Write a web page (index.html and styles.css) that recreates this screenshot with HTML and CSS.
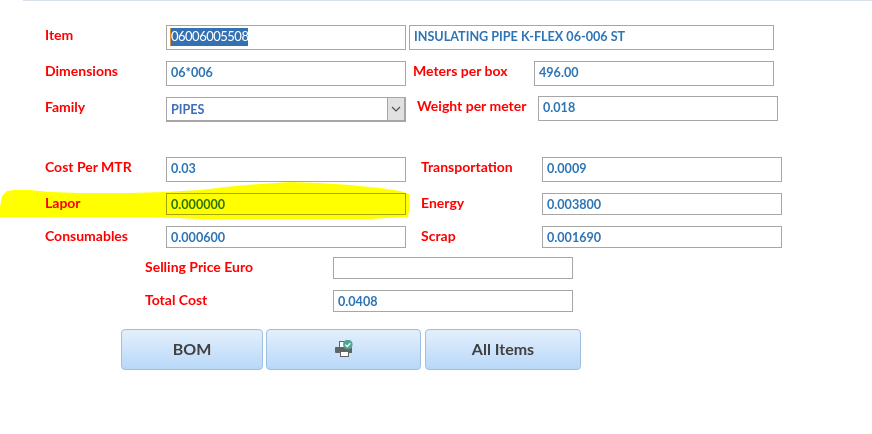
FILE: index.html
```html
<!DOCTYPE html>
<html lang="en">
<head>
<meta charset="utf-8">
<title>Item</title>
<link rel="stylesheet" href="styles.css">
</head>
<body>
<div class="topline"></div>
<main class="form">
  <div class="row h25">
    <span class="label">Item</span>
    <div class="box w240"><span class="selected">06006005508</span></div>
    <div class="box name">INSULATING PIPE K-FLEX 06-006 ST</div>
  </div>
  <div class="row h25 mt11">
    <span class="label">Dimensions</span>
    <div class="box w240">06*006</div>
    <span class="label side7">Meters per box</span>
    <div class="box w240">496.00</div>
  </div>
  <div class="row h25 mt11">
    <span class="label">Family</span>
    <div class="box w240 combo">
      <span class="combo-text">PIPES</span>
      <span class="combo-btn">
        <svg width="10" height="6" viewBox="0 0 10 6"><path d="M1 1l4 4 4-4" fill="none" stroke="#505050" stroke-width="1.2"/></svg>
      </span>
    </div>
    <span class="label side11 raise">Weight per meter</span>
    <div class="box w240 raise">0.018</div>
  </div>
  <div class="row h25 mt35">
    <span class="label">Cost Per MTR</span>
    <div class="box w240">0.03</div>
    <span class="label side15">Transportation</span>
    <div class="box w240">0.0009</div>
  </div>
  <div class="row h22 mt11">
    <span class="label">Lapor</span>
    <div class="box w240">0.000000</div>
    <span class="label side15">Energy</span>
    <div class="box w240">0.003800</div>
  </div>
  <div class="row h22 mt11">
    <span class="label">Consumables</span>
    <div class="box w240">0.000600</div>
    <span class="label side15">Scrap</span>
    <div class="box w240">0.001690</div>
  </div>
  <div class="row h22 mt9 inset">
    <span class="label wide">Selling Price Euro</span>
    <div class="box w240"></div>
  </div>
  <div class="row h22 mt11 inset">
    <span class="label wide">Total Cost</span>
    <div class="box w240">0.0408</div>
  </div>
  <div class="buttons">
    <button class="btn b1" type="button">BOM</button>
    <button class="btn b2" type="button" aria-label="Print">
      <svg width="18" height="17" viewBox="0 0 18 17">
        <rect x="4.500" y="1.500" width="6" height="6" fill="#fff" stroke="#5f6468"/>
        <path d="M1 7h15a1 1 0 0 1 1 1v5h-3v-2H5v2H1a1 1 0 0 1-1-1V8a1 1 0 0 1 1-1z" fill="#5f6468"/>
        <rect x="5.500" y="11.500" width="8" height="5" fill="#fff" stroke="#5f6468"/>
        <circle cx="12.800" cy="4.500" r="4.800" fill="#4fa58f"/>
        <path d="M10.300 4.600l2 2 3-3.300" fill="none" stroke="#fff" stroke-width="1.300"/>
      </svg>
    </button>
    <button class="btn b3" type="button">All Items</button>
  </div>
</main>
<svg class="marker" width="412" height="40" viewBox="0 0 412 40">
  <path d="M0 25 L2 14 L7 9 L14 8 L30 8 L50 10 L80 11 L130 11 L165 10 L200 8 L235 4 L260 2 L290 0 L320 1 L350 3 L380 6 L400 9 L409 12 L410 24 L408 35 L370 37 L300 37 L200 37 L150 35 L60 35 L0 35 Z" fill="#ffff00"/>
</svg>
</body>
</html>
```
FILE: styles.css
```css
html, body {
  margin: 0;
  padding: 0;
  background: #fff;
}
body {
  position: relative;
  width: 872px;
  height: 434px;
  overflow: hidden;
  font-family: "Lato", "Carlito", "Liberation Sans", sans-serif;
  font-size: 12.6px;
  font-weight: 700;
}
.topline {
  height: 1px;
  margin-left: 23px;
  background: #d8e0ec;
}
.form {
  padding: 24px 0 0 45px;
}
.row {
  display: flex;
  align-items: center;
}
.h25 { height: 25px; }
.h22 { height: 22px; }
.mt9 { margin-top: 9px; }
.mt11 { margin-top: 11px; }
.mt35 { margin-top: 35px; }
.inset { padding-left: 100px; }
.label {
  flex: none;
  width: 121px;
  color: #ff0000;
  font-size: 14px;
  white-space: nowrap;
}
.h25 .label { margin-bottom: 6px; }
.h22 .label { margin-bottom: 4px; }
.label.wide { width: 188px; }
.side7 { margin-left: 7px; }
.side11 { margin-left: 11px; }
.side15 { margin-left: 15px; }
.box {
  flex: none;
  box-sizing: border-box;
  height: 100%;
  display: flex;
  align-items: center;
  padding-left: 4px;
  border: 1px solid #a6a6a6;
  color: #2e75b6;
  background: #fff;
  white-space: nowrap;
}
.h25 .box { padding-bottom: 2px; }
.w240 { width: 240px; }
.name {
  width: 365px;
  margin-left: 3px;
}
.raise { position: relative; top: -1px; }
.selected {
  height: 18px;
  box-sizing: border-box;
  line-height: 17px;
  font-weight: 400;
  font-size: 13px;
  color: #fff;
  background: #3371b3;
  border-left: 1px solid #d98c30;
  margin-left: -1px;
  letter-spacing: -0.5px;
}
.h25 .combo {
  padding-right: 0;
  padding-bottom: 0;
  border-right-width: 2px;
  border-bottom-width: 2px;
  justify-content: space-between;
}
.combo-text { color: #3f6fb9; }
.combo-btn {
  box-sizing: border-box;
  width: 17px;
  height: 100%;
  display: flex;
  align-items: center;
  justify-content: center;
  background: #e1e1e1;
  border-left: 1px solid #a6a6a6;
}
.buttons {
  display: flex;
  margin: 17px 0 0 76px;
}
.btn {
  box-sizing: border-box;
  height: 41px;
  padding: 0 0 2px;
  display: flex;
  align-items: center;
  justify-content: center;
  border: 1px solid #9dbfe2;
  border-radius: 4px;
  background: linear-gradient(#e4effc, #b8d8f9);
  color: #404040;
  font-family: inherit;
  font-size: 16px;
  font-weight: 700;
}
.b1 { width: 142px; }
.b2 { width: 155px; margin-left: 3px; }
.b3 { width: 156px; margin-left: 4px; }
.marker {
  position: absolute;
  left: 0;
  top: 182px;
  mix-blend-mode: multiply;
}
```
